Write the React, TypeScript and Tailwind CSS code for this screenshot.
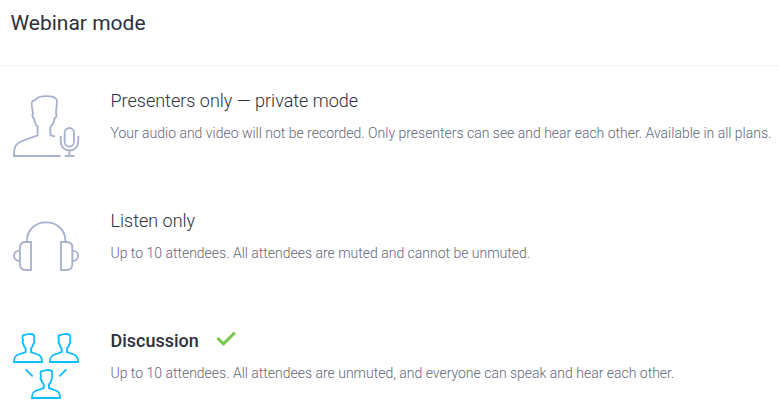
import type { ReactNode } from 'react';

const BUST =
  'M42 111C42 98 44 94 52 90L77 81V70C73 67 71 63 70 57C67 54 67 50 69 46C66 34 67 30 72 31C77 26 97 26 101 30C105 34 103 40 102 46C104 50 103 54 100 57C99 63 97 67 93 70V81L117 90C124 94 126 98 126 111Z';

function PresenterIcon() {
  return (
    <svg className="block h-20 w-[95px]" viewBox="0 0 285 240" fill="none" stroke="#a9b1cc" strokeWidth="5.5">
      <path d="M182 213H42C42 185 46 177 66 168L113 151V125C106 121 104 112 102 101C97 96 96 90 99 84C95 66 93 50 98 47C103 49 106 45 110 41C120 31 160 31 169 42C174 52 168 67 168 84C171 92 168 98 163 101C162 113 159 120 151 125V150L165 155" />
      <rect x="194" y="129" width="28" height="56" rx="14" />
      <path d="M182 153V168C182 206 235 206 235 168V153M208 197V213M194 213H223" />
    </svg>
  );
}

function HeadphonesIcon() {
  return (
    <svg className="block h-20 w-[95px]" viewBox="0 0 285 240" fill="none" stroke="#a9b1cc" strokeWidth="5.5">
      <path d="M81 111V107C81 34 196 34 196 107V111" />
      <path d="M93 111V195H76C65 195 60 187 60 178V128C60 117 66 111 76 111ZM183 111V195H199C211 195 217 187 217 178V128C217 117 211 111 199 111Z" />
      <path d="M60 137C36 137 36 168 60 168M217 137C240 137 240 168 217 168" />
    </svg>
  );
}

function DiscussionIcon() {
  return (
    <svg className="block h-20 w-[95px]" viewBox="0 0 285 240" fill="none" stroke="#0bbcff" strokeWidth="5.5">
      <path d={BUST} />
      <path d={BUST} transform="translate(108 0)" />
      <path d={BUST} transform="translate(54 108)" />
      <path d="M77 133L98 154M199 133L178 154" />
    </svg>
  );
}

interface ModeProps {
  icon: ReactNode;
  title: string;
  text: string;
  selected?: boolean;
}

function Mode({ icon, title, text, selected = false }: ModeProps) {
  return (
    <li className="flex h-[120px] items-start">
      <div className="w-[110.5px] shrink-0">{icon}</div>
      <div className="whitespace-nowrap pt-1">
        <div className="flex h-6 items-center">
          <h2 className={selected ? 'text-[18px] leading-6 font-medium text-[#2c303d]' : 'text-[18px] leading-6 font-light text-[#2c303d]'}>
            {title}
          </h2>
          {selected && (
            <svg className="ml-[17.5px] h-5 w-5" viewBox="0 0 20 20" fill="none" stroke="#7ac74f" strokeWidth="3">
              <path d="M1.4 7L7.5 12.9L18.8 1.6" />
            </svg>
          )}
        </div>
        <p className="mt-2.5 text-[14px] leading-5 font-light tracking-[-0.006px] text-[#626779]">{text}</p>
      </div>
    </li>
  );
}

export default function App() {
  return (
    <main className="h-[417px] w-full overflow-hidden bg-white font-['Roboto',sans-serif]">
      <header className="h-[66px] border-b border-[#f3f3f5] pt-[9px] pl-[10.5px]">
        <h1 className="text-[21px] leading-7 text-[#2c303d]">Webinar mode</h1>
      </header>
      <ul className="pt-[19px]">
        <Mode
          icon={<PresenterIcon />}
          title="Presenters only — private mode"
          text="Your audio and video will not be recorded. Only presenters can see and hear each other. Available in all plans."
        />
        <Mode icon={<HeadphonesIcon />} title="Listen only" text="Up to 10 attendees. All attendees are muted and cannot be unmuted." />
        <Mode
          icon={<DiscussionIcon />}
          title="Discussion"
          text="Up to 10 attendees. All attendees are unmuted, and everyone can speak and hear each other."
          selected
        />
      </ul>
    </main>
  );
}
